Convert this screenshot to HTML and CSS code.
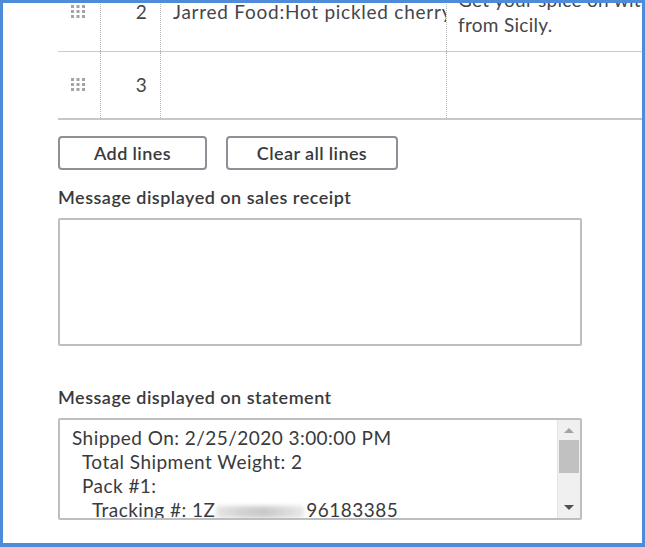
FILE: index.html
```html
<!DOCTYPE html>
<html lang="en">
<head>
<meta charset="utf-8">
<title>Sales receipt</title>
<link rel="stylesheet" href="styles.css">
</head>
<body>
<div class="frame">
  <div class="content">
    <div class="lines-table">
      <div class="row row-tall">
        <div class="cell handle">
          <svg width="14" height="14" viewBox="0 0 14 14" aria-hidden="true">
            <g fill="#a2a4a8">
              <rect x="0" y="0" width="3" height="3"/><rect x="5.5" y="0" width="3" height="3"/><rect x="11" y="0" width="3" height="3"/>
              <rect x="0" y="5" width="3" height="3"/><rect x="5.5" y="5" width="3" height="3"/><rect x="11" y="5" width="3" height="3"/>
              <rect x="0" y="10" width="3" height="3"/><rect x="5.5" y="10" width="3" height="3"/><rect x="11" y="10" width="3" height="3"/>
            </g>
          </svg>
        </div>
        <div class="cell num">2</div>
        <div class="cell product">Jarred Food:Hot pickled cherry peppers</div>
        <div class="cell desc">Get your spice on with these peppers<br>from Sicily.</div>
      </div>
      <div class="row row-last">
        <div class="cell handle">
          <svg width="14" height="14" viewBox="0 0 14 14" aria-hidden="true">
            <g fill="#a2a4a8">
              <rect x="0" y="0" width="3" height="3"/><rect x="5.5" y="0" width="3" height="3"/><rect x="11" y="0" width="3" height="3"/>
              <rect x="0" y="5" width="3" height="3"/><rect x="5.5" y="5" width="3" height="3"/><rect x="11" y="5" width="3" height="3"/>
              <rect x="0" y="10" width="3" height="3"/><rect x="5.5" y="10" width="3" height="3"/><rect x="11" y="10" width="3" height="3"/>
            </g>
          </svg>
        </div>
        <div class="cell num">3</div>
        <div class="cell product"></div>
        <div class="cell desc"></div>
      </div>
    </div>

    <div class="actions">
      <button class="btn btn-add">Add lines</button>
      <button class="btn btn-clear">Clear all lines</button>
    </div>

    <div class="field-label label-receipt">Message displayed on sales receipt</div>
    <div class="textbox box-receipt"></div>

    <div class="field-label label-statement">Message displayed on statement</div>
    <div class="textbox box-statement">
      <div class="statement-text">
        <div class="ln">Shipped On: 2/25/2020 3:00:00 PM</div>
        <div class="ln ind1">Total Shipment Weight: 2</div>
        <div class="ln ind1">Pack #1:</div>
        <div class="ln ind2">Tracking #: 1Z<span class="redact"></span>96183385</div>
      </div>
      <div class="scrollbar">
        <div class="sb-arrow sb-up"></div>
        <div class="sb-thumb"></div>
        <div class="sb-fill"></div>
        <div class="sb-arrow sb-down"></div>
      </div>
    </div>
  </div>
</div>
</body>
</html>
```
FILE: styles.css
```css
html, body {
  margin: 0;
  padding: 0;
  background: #ffffff;
}

.frame {
  width: 645px;
  height: 547px;
  box-sizing: border-box;
  border: 3px solid #4e8cd9;
  border-bottom-width: 4px;
  overflow: hidden;
  background: #ffffff;
  font-family: Lato, "Open Sans", sans-serif;
  color: #393a3d;
}

.content {
  padding-left: 55px;
}

/* table */
.lines-table {
  margin-top: -24px;
  width: 700px;
}

.row {
  display: grid;
  grid-template-columns: 42px 60px 286px 1fr;
  border-bottom: 1px solid #c9cacc;
}

.row-tall {
  height: 73px;
  box-sizing: border-box;
}

.row-last {
  height: 68px;
  box-sizing: border-box;
  border-bottom: 2px solid #c6c7c9;
}

.cell {
  font-size: 19px;
  line-height: 25px;
  letter-spacing: 0.3px;
  color: #45464a;
  padding-top: 20px;
  white-space: nowrap;
  overflow: hidden;
}

.cell + .cell {
  border-left: 1px dotted #b5b6b8;
}

.handle {
  padding-top: 26px;
  padding-left: 13px;
  line-height: 0;
}

.num {
  text-align: right;
  padding-right: 13px;
}

.product {
  padding-left: 12px;
  letter-spacing: 0.75px;
}

.desc {
  padding-left: 11px;
}

.row-tall .desc {
  padding-top: 8px;
}

/* buttons */
.actions {
  display: flex;
  gap: 19px;
  margin-top: 16px;
}

.btn {
  height: 34px;
  box-sizing: border-box;
  border: 2px solid #8d9096;
  border-radius: 4px;
  background: #ffffff;
  color: #393a3d;
  font-family: Lato, "Open Sans", sans-serif;
  font-size: 18px;
  letter-spacing: 0.4px;
  font-weight: 600;
  padding: 0;
}

.btn-add { width: 149px; }
.btn-clear { width: 172px; }

/* fields */
.field-label {
  font-size: 18px;
  line-height: 20px;
  letter-spacing: 0.5px;
  font-weight: 600;
  color: #393a3d;
}

.label-receipt { margin-top: 17px; }
.label-statement { margin-top: 41px; }

.textbox {
  width: 524px;
  box-sizing: border-box;
  border: 2px solid #bbbec3;
  border-radius: 2px;
  margin-top: 11px;
  background: #ffffff;
}

.box-receipt {
  height: 128px;
}

.box-statement {
  height: 102px;
  display: flex;
}

.statement-text {
  flex: 1;
  overflow: hidden;
  padding: 6px 0 0 12px;
  font-size: 19px;
  line-height: 24px;
  letter-spacing: 0.45px;
  color: #393a3d;
  white-space: nowrap;
}

.ind1 { padding-left: 10px; }
.ind2 { padding-left: 20px; }

.redact {
  display: inline-block;
  width: 88px;
  height: 12px;
  margin: 0 2px 0 1px;
  background: linear-gradient(90deg, #e6e6e6, #d2d2d2 30%, #c9c9c9 55%, #dadada 80%, #e8e8e8);
  filter: blur(2px);
  vertical-align: -1px;
}

.scrollbar {
  width: 22px;
  background: #f0f0f0;
  border-left: 1px solid #e4e4e4;
  display: flex;
  flex-direction: column;
  align-items: center;
}

.sb-arrow {
  height: 20px;
  width: 22px;
  position: relative;
  flex: none;
}

.sb-up::after,
.sb-down::after {
  content: "";
  position: absolute;
  left: 6px;
  border-left: 5px solid transparent;
  border-right: 5px solid transparent;
}

.sb-up::after {
  top: 8px;
  border-bottom: 5px solid #a3a3a3;
}

.sb-down::after {
  top: 7px;
  border-top: 5px solid #505050;
}

.sb-thumb {
  width: 20px;
  height: 33px;
  background: #c1c1c1;
  flex: none;
}

.sb-fill {
  flex: 1;
}
```
